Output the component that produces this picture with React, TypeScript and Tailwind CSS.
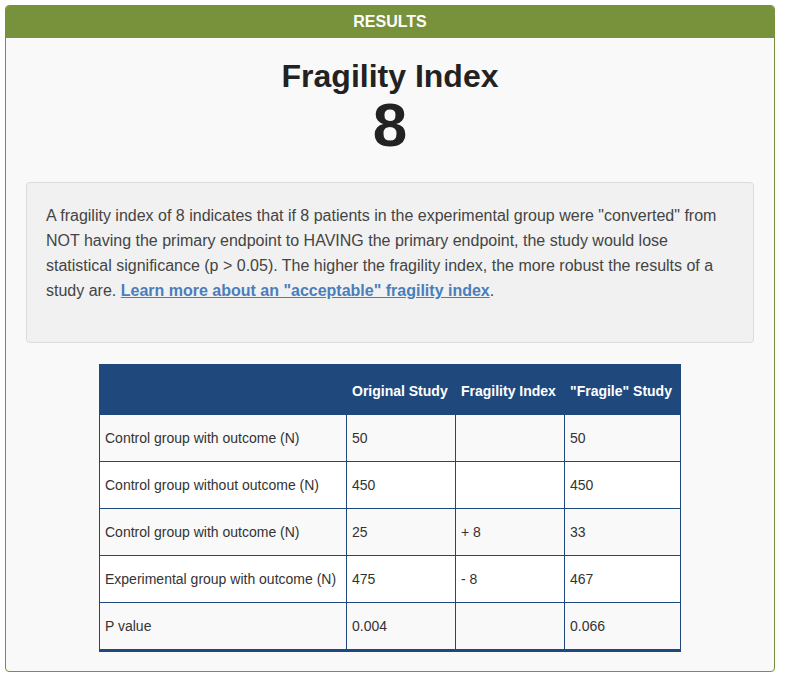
import React from "react";

const rows = [
  ["Control group with outcome (N)", "50", "", "50"],
  ["Control group without outcome (N)", "450", "", "450"],
  ["Control group with outcome (N)", "25", "+ 8", "33"],
  ["Experimental group with outcome (N)", "475", "- 8", "467"],
  ["P value", "0.004", "", "0.066"],
];

export default function App() {
  return (
    <div className="bg-white w-[785px] h-[678px] p-[5px]" style={{ fontFamily: '"Liberation Sans", Arial, sans-serif' }}>
      <div className="w-[770px] h-[667px] border border-[#77923a] rounded-[4px] bg-[#f9f9f9] overflow-hidden">
        <div className="h-[32px] bg-[#77923a] flex items-center justify-center text-white font-bold text-[16px]">
          RESULTS
        </div>
        <div className="px-[20px]">
          <div className="mt-[21px] text-center text-[#222] font-bold text-[32px] leading-[35px]">Fragility Index</div>
          <div className="text-center text-[#222] font-bold text-[62px] leading-[62px]">8</div>
          <div className="mt-[26px] border border-[#dcdcdc] rounded-[4px] bg-[#f1f1f1] px-[19px] pt-[20px] pb-[19px]">
            <p className="text-[16px] leading-[25px] text-[#444] mb-[20px]">
              A fragility index of 8 indicates that if 8 patients in the experimental group were "converted" from NOT having the primary endpoint to HAVING the primary endpoint, the study would lose statistical significance (p &gt; 0.05). The higher the fragility index, the more robust the results of a study are.{" "}
              <a href="#" className="font-bold text-[#4a7ebb] underline">Learn more about an "acceptable" fragility index</a>.
            </p>
          </div>
          <div className="flex justify-center mt-[21px]">
            <table className="table-fixed border-collapse w-[581px] text-[14px] text-[#333]">
              <colgroup>
                <col className="w-[247px]" />
                <col className="w-[109px]" />
                <col className="w-[109px]" />
                <col className="w-[116px]" />
              </colgroup>
              <thead>
                <tr className="bg-[#1f497d] h-[50px]">
                  <th className="border border-[#1f497d]"></th>
                  <th className="border border-[#1f497d] text-left text-white font-bold pl-[5px] pt-[4px] whitespace-nowrap">Original Study</th>
                  <th className="border border-[#1f497d] text-left text-white font-bold pl-[5px] pt-[4px] whitespace-nowrap">Fragility Index</th>
                  <th className="border border-[#1f497d] text-left text-white font-bold pl-[5px] pt-[4px] whitespace-nowrap">"Fragile" Study</th>
                </tr>
              </thead>
              <tbody>
                {rows.map((r, i) => (
                  <tr
                    key={i}
                    className={
                      i === rows.length - 1
                        ? "bg-[#f9f9f9] h-[48px]"
                        : i % 2 === 0
                        ? "bg-[#f9f9f9] h-[47px]"
                        : "bg-white h-[47px]"
                    }
                  >
                    {r.map((c, j) => (
                      <td
                        key={j}
                        className={
                          i === rows.length - 1
                            ? "border border-[#1f497d] border-b-[3px] pl-[5px] align-middle whitespace-nowrap"
                            : "border border-[#1f497d] pl-[5px] align-middle whitespace-nowrap"
                        }
                      >
                        {c}
                      </td>
                    ))}
                  </tr>
                ))}
              </tbody>
            </table>
          </div>
        </div>
      </div>
    </div>
  );
}
